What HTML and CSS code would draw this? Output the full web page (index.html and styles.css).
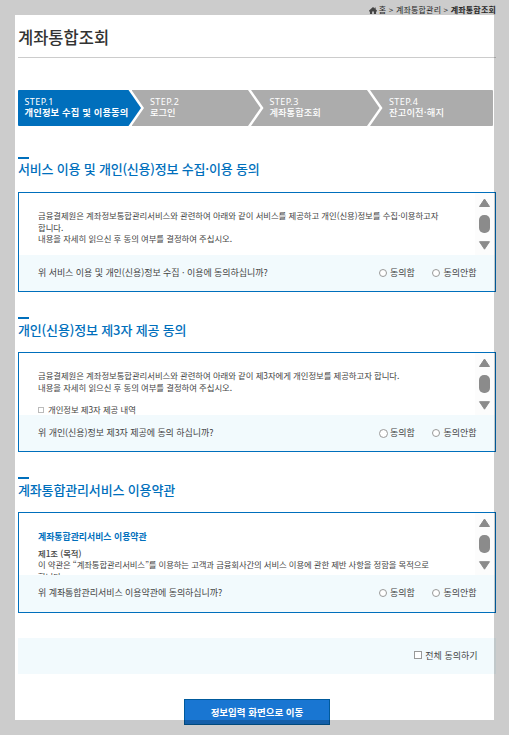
FILE: index.html
```html
<!DOCTYPE html>
<html lang="ko">
<head>
<meta charset="utf-8">
<title>계좌통합조회</title>
<link rel="stylesheet" href="styles.css">
</head>
<body>
<div class="page">
  <nav class="crumbs">
    <svg class="home" viewBox="0 0 9 8"><path d="M4.5 0L0 4v1h1v3h2.500V5h2v3H8V5h1V4L7.500 2.700V.5h-1v1.200z"/></svg>
    <span>홈 &gt; 계좌통합관리 &gt; <b>계좌통합조회</b></span>
  </nav>
  <h1 class="title">계좌통합조회</h1>
  <ol class="steps">
    <li class="step active"><span>STEP.1</span><b>개인정보 수집 및 이용동의</b></li>
    <li class="step"><span>STEP.2</span><b>로그인</b></li>
    <li class="step"><span>STEP.3</span><b>계좌통합조회</b></li>
    <li class="step"><span>STEP.4</span><b>잔고이전·해지</b></li>
  </ol>

  <section class="consent first">
    <h2 class="heading">서비스 이용 및 개인(신용)정보 수집·이용 동의</h2>
    <div class="box">
      <div class="terms">
        <div class="copy">
          <p>금융결제원은 계좌정보통합관리서비스와 관련하여 아래와 같이 서비스를 제공하고 개인(신용)정보를 수집·이용하고자<br>합니다.</p>
          <p>내용을 자세히 읽으신 후 동의 여부를 결정하여 주십시오.</p>
        </div>
        <svg class="scroll" viewBox="0 0 20 62"><path d="M4.500 13.500L9.500 6l5 7.500zM4.500 48.700L9.500 56.200l5-7.500z"/><rect x="4" y="22" width="11" height="18" rx="5"/></svg>
      </div>
      <div class="question">
        <span class="ask">위 서비스 이용 및 개인(신용)정보 수집 · 이용에 동의하십니까?</span>
        <label class="yes"><input type="radio" name="service">동의함</label>
        <label class="no"><input type="radio" name="service">동의안함</label>
      </div>
    </div>
  </section>

  <section class="consent">
    <h2 class="heading">개인(신용)정보 제3자 제공 동의</h2>
    <div class="box">
      <div class="terms">
        <div class="copy">
          <p>금융결제원은 계좌정보통합관리서비스와 관련하여 아래와 같이 제3자에게 개인정보를 제공하고자 합니다.</p>
          <p>내용을 자세히 읽으신 후 동의 여부를 결정하여 주십시오.</p>
          <p class="item"><i class="square"></i>개인정보 제3자 제공 내역</p>
        </div>
        <svg class="scroll" viewBox="0 0 20 62"><path d="M4.500 13.500L9.500 6l5 7.500zM4.500 48.700L9.500 56.200l5-7.500z"/><rect x="4" y="22" width="11" height="18" rx="5"/></svg>
      </div>
      <div class="question">
        <span class="ask">위 개인(신용)정보 제3자 제공에 동의 하십니까?</span>
        <label class="yes large"><input type="radio" name="third">동의함</label>
        <label class="no"><input type="radio" name="third">동의안함</label>
      </div>
    </div>
  </section>

  <section class="consent last">
    <h2 class="heading">계좌통합관리서비스 이용약관</h2>
    <div class="box">
      <div class="terms">
        <div class="copy">
          <h3 class="subject">계좌통합관리서비스 이용약관</h3>
          <h4 class="article">제1조 (목적)</h4>
          <p>이 약관은 “계좌통합관리서비스”를 이용하는 고객과 금융회사간의 서비스 이용에 관한 제반 사항을 정함을 목적으로<br>합니다.</p>
        </div>
        <svg class="scroll" viewBox="0 0 20 62"><path d="M4.500 13.500L9.500 6l5 7.500zM4.500 48.700L9.500 56.200l5-7.500z"/><rect x="4" y="22" width="11" height="18" rx="5"/></svg>
      </div>
      <div class="question">
        <span class="ask">위 계좌통합관리서비스 이용약관에 동의하십니까?</span>
        <label class="yes"><input type="radio" name="terms">동의함</label>
        <label class="no"><input type="radio" name="terms">동의안함</label>
      </div>
    </div>
  </section>

  <div class="all"><label><input type="checkbox">전체 동의하기</label></div>
  <button class="submit" type="button">정보입력 화면으로 이동</button>
</div>
<div class="frame"></div>
</body>
</html>
```
FILE: styles.css
```css
* { box-sizing: border-box; margin: 0; padding: 0; }
html, body { height: 735px; overflow: hidden; background: #fff; }
body {
  font-family: "Noto Sans CJK KR", sans-serif;
  font-size: 8.4px;
  color: #444;
}
.page { width: 478px; margin-left: 18px; display: flex; flex-direction: column; }
.frame {
  position: absolute;
  inset: 0;
  border: 15px solid rgba(0, 0, 0, .2);
  pointer-events: none;
}
.crumbs {
  height: 20px;
  display: flex;
  justify-content: flex-end;
  align-items: center;
  gap: 2px;
  font-size: 8px;
  letter-spacing: .19px;
  line-height: 20px;
  color: #333;
}
.home { width: 8px; height: 7px; fill: #555; }
.title {
  height: 38px;
  border-bottom: 1px solid #ccc;
  font-size: 16.5px;
  font-weight: 500;
  line-height: 34px;
  color: #333;
}
.steps {
  height: 36px;
  margin-top: 32px;
  width: 475px;
  display: grid;
  grid-template-columns: 113.5px 119.5px 119px 123px;
  list-style: none;
  color: #fff;
  border-radius: 1px;
  overflow: hidden;
}
.step {
  margin-right: -9.5px;
  padding: 6px 0 0 18.5px;
  background: #acacac;
  clip-path: polygon(0 0, calc(100% - 12.5px) 0, 100% 50%, calc(100% - 12.5px) 100%, 0 100%, 12.5px 50%);
  font-size: 9.3px;
  line-height: 11px;
  white-space: nowrap;
}
.step span, .step b { display: block; }
.step span { font-family: "Noto Sans", sans-serif; font-size: 9px; letter-spacing: .4px; }
.step b { font-weight: 500; }
.step.active {
  padding-left: 6.5px;
  background: #006fbc;
  clip-path: polygon(0 0, calc(100% - 12.5px) 0, 100% 50%, calc(100% - 12.5px) 100%, 0 100%);
}
.step.active b { font-weight: 700; letter-spacing: .15px; }
.step:last-child {
  margin-right: 0;
  padding-left: 19px;
  clip-path: polygon(0 0, 100% 0, 100% 100%, 0 100%, 12.5px 50%);
}
.step:last-child b { letter-spacing: .15px; }
.consent { height: 160px; padding-top: 31px; }
.consent.last { height: 161px; }
.heading {
  height: 35px;
  font-size: 13px;
  font-weight: 500;
  letter-spacing: -.15px;
  line-height: 22px;
  color: #006fbc;
  white-space: nowrap;
}
.first .heading { letter-spacing: -.2px; line-height: 20px; }
.heading::before { content: ""; display: block; width: 11px; height: 2px; background: #006fbc; }
.box { height: 100px; border: 1px solid #006fbc; display: flex; flex-direction: column; }
.last .box { height: 101px; }
.terms { height: 62px; display: flex; overflow: hidden; }
.copy { flex: 1; padding: 17px 0 0 19px; letter-spacing: -.065px; line-height: 11.6px; white-space: nowrap; }
.last .copy p { letter-spacing: -.12px; }
.scroll {
  width: 20px;
  height: 62px;
  fill: #8b8b8b;
  stroke: #8b8b8b;
  stroke-width: 0;
  background: #fcfcfc;
}
.scroll path { stroke-width: 1px; stroke-linejoin: round; }
.item { margin-top: 11px; display: flex; align-items: center; gap: 4px; }
.square { width: 6px; height: 6px; border: 1px solid #bbb; }
.subject { font-size: 8.9px; font-weight: 700; letter-spacing: 0; line-height: 13px; color: #006fbc; }
.article { margin-top: 4px; font-size: 8.4px; font-weight: 500; line-height: 12px; }
.question {
  flex: 1;
  padding: 0 18.5px 0 19px;
  display: flex;
  align-items: center;
  background: #f2fafd;
  font-size: 9px;
  line-height: 14px;
  white-space: nowrap;
}
.last .question { padding-bottom: 1px; }
.ask { flex: 1; letter-spacing: -.06px; }
label { display: flex; align-items: center; gap: 3px; }
.no { margin-left: 17.5px; }
input { appearance: none; width: 8px; height: 8px; border: 1px solid #999; background: #fff; }
input[type="radio"] { border-radius: 50%; }
.large input { width: 9px; height: 9px; }
.large { gap: 2.5px; }
.all {
  height: 36px;
  margin-top: 31px;
  padding: 0 18.5px 2px 0;
  display: flex;
  justify-content: flex-end;
  background: #f2fafd;
  font-size: 9px;
}
.submit {
  width: 146px;
  height: 26px;
  margin: 25px 0 0 166px;
  border: 1px solid #005a9c;
  background: #1976d2;
  font: 700 9.5px/24px "Noto Sans CJK KR", sans-serif;
  color: #fff;
}
```
